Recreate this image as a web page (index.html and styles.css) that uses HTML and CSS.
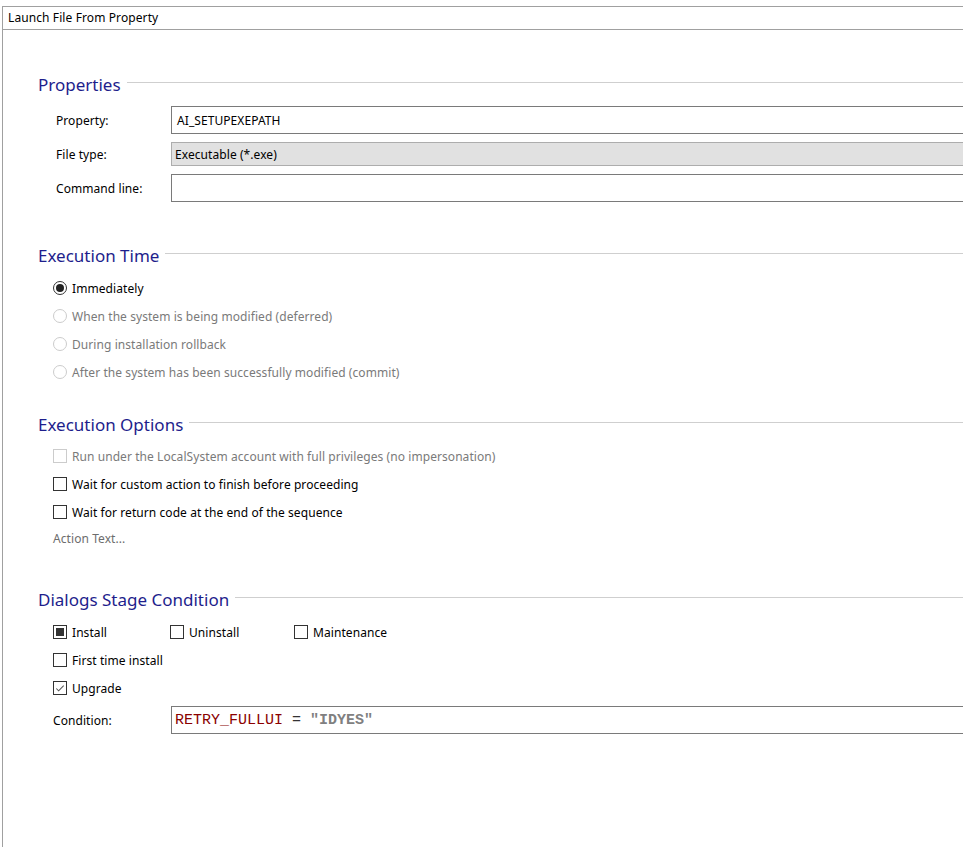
FILE: index.html
```html
<!DOCTYPE html>
<html>
<head>
<meta charset="utf-8">
<link rel="stylesheet" href="styles.css">
</head>
<body>
<div class="panel">
  <div class="titlebar">Launch File From Property</div>
  <div class="content">
    <section class="sec sec-props">
      <div class="heading"><span>Properties</span><i class="rule"></i></div>
      <div class="form">
        <div class="row r28"><label>Property:</label><div class="field">AI_SETUPEXEPATH</div></div>
        <div class="row r24"><label>File type:</label><div class="field combo">Executable (*.exe)</div></div>
        <div class="row r28"><label>Command line:</label><div class="field"></div></div>
      </div>
    </section>

    <section class="sec sec-time">
      <div class="heading"><span>Execution Time</span><i class="rule"></i></div>
      <div class="opts">
        <div class="opt"><span class="radio on"></span><span>Immediately</span></div>
        <div class="opt dis"><span class="radio"></span><span>When the system is being modified (deferred)</span></div>
        <div class="opt dis"><span class="radio"></span><span>During installation rollback</span></div>
        <div class="opt dis"><span class="radio"></span><span>After the system has been successfully modified (commit)</span></div>
      </div>
    </section>

    <section class="sec sec-exopts">
      <div class="heading"><span>Execution Options</span><i class="rule"></i></div>
      <div class="opts">
        <div class="opt dis"><span class="check"></span><span>Run under the LocalSystem account with full privileges (no impersonation)</span></div>
        <div class="opt"><span class="check"></span><span>Wait for custom action to finish before proceeding</span></div>
        <div class="opt"><span class="check"></span><span>Wait for return code at the end of the sequence</span></div>
        <div class="link">Action Text...</div>
      </div>
    </section>

    <section class="sec sec-dialogs">
      <div class="heading"><span>Dialogs Stage Condition</span><i class="rule"></i></div>
      <div class="opts">
        <div class="opt-line">
          <div class="opt w-install"><span class="check mixed"></span><span>Install</span></div>
          <div class="opt w-uninstall"><span class="check"></span><span>Uninstall</span></div>
          <div class="opt"><span class="check"></span><span>Maintenance</span></div>
        </div>
        <div class="opt"><span class="check"></span><span>First time install</span></div>
        <div class="opt"><span class="check checked"><svg width="13" height="13" viewBox="0 0 13 13"><path d="M2.5 6.5 L5 9 L10.5 3.5" fill="none" stroke="#555" stroke-width="1.1"/></svg></span><span>Upgrade</span></div>
        <div class="cond-row"><label>Condition:</label><div class="field code"><span class="code-text"><span class="c-prop">RETRY_FULLUI</span> <span class="c-op">=</span> <span class="c-str">"IDYES"</span></span></div></div>
      </div>
    </section>
  </div>
</div>
</body>
</html>
```

FILE: styles.css
```css
html, body {
  margin: 0;
  padding: 0;
  overflow: hidden;
  background: #ffffff;
}
body {
  width: 963px;
  height: 847px;
  font-family: "Noto Sans", "Open Sans", sans-serif;
  font-size: 12px;
  letter-spacing: 0.07px;
  color: #000;
}
.panel {
  margin-top: 6px;
  margin-left: 2px;
  height: 841px;
  border-top: 1px solid #a0a0a0;
  border-left: 1px solid #a0a0a0;
  box-sizing: border-box;
}
.titlebar {
  height: 22px;
  line-height: 22px;
  padding-left: 5px;
  border-bottom: 1px solid #a0a0a0;
  font-size: 12px;
  letter-spacing: 0.1px;
}
.content {
  padding-left: 35px;
}
.heading {
  display: flex;
  align-items: center;
  height: 24px;
  font-size: 17px;
  letter-spacing: 0;
  color: #1e1e8c;
}
.heading span {
  white-space: nowrap;
}
.heading .rule {
  flex: 1;
  height: 0;
  border-top: 1px solid #cfcfcf;
  margin-left: 6px;
  margin-top: -4px;
}
.sec-props { padding-top: 42px; }
.sec-time { padding-top: 41px; }
.sec-exopts { padding-top: 26px; }
.sec-dialogs { padding-top: 36px; }

.form {
  margin-top: 10px;
  margin-left: 18px;
  display: flex;
  flex-direction: column;
  gap: 8px;
}
.row {
  display: flex;
  align-items: center;
}
.row label {
  width: 115px;
  flex: none;
}
.r28 { height: 28px; }
.r24 { height: 24px; }
.field {
  flex: 1;
  height: 100%;
  box-sizing: border-box;
  border: 1px solid #7a7a7a;
  border-right: none;
  padding-left: 5px;
  display: flex;
  align-items: center;
  margin-right: -20px;
}
.combo {
  background: #e1e1e1;
  border-color: #adadad;
  padding-left: 3px;
}
.opts {
  margin-left: 15px;
  margin-top: 7px;
}
.sec-exopts .opts { margin-top: 6px; }
.opt {
  display: flex;
  align-items: center;
  height: 28px;
  gap: 5px;
}
.opt.dis { color: #7a7a7a; }
.radio {
  width: 14px;
  height: 14px;
  box-sizing: border-box;
  border: 1px solid #333;
  border-radius: 50%;
  flex: none;
  display: flex;
  align-items: center;
  justify-content: center;
}
.radio.on::after {
  content: "";
  width: 8px;
  height: 8px;
  border-radius: 50%;
  background: #222;
}
.opt.dis .radio { border-color: #cccccc; }
.check {
  width: 14px;
  height: 14px;
  box-sizing: border-box;
  border: 1px solid #333;
  flex: none;
  display: flex;
  align-items: center;
  justify-content: center;
}
.check svg { display: block; }
.opt.dis .check { border-color: #cccccc; }
.check.mixed::after {
  content: "";
  width: 8px;
  height: 8px;
  background: #333;
}
.link {
  height: 24px;
  line-height: 24px;
  margin-top: 1px;
  color: #6d6d6d;
}
.opt-line {
  display: flex;
}
.w-install { width: 117px; }
.w-uninstall { width: 124px; }
.cond-row {
  display: flex;
  align-items: center;
  height: 28px;
  margin-top: 4px;
}
.cond-row label {
  width: 118px;
  flex: none;
}
.code {
  font-family: "Liberation Mono", "DejaVu Sans Mono", monospace;
  font-size: 15px;
  letter-spacing: 0;
  padding-left: 3px;
}
.code-text { white-space: pre; }
.c-prop { color: #8b0000; }
.c-op { color: #333; }
.c-str { color: #808080; font-weight: bold; }
```
